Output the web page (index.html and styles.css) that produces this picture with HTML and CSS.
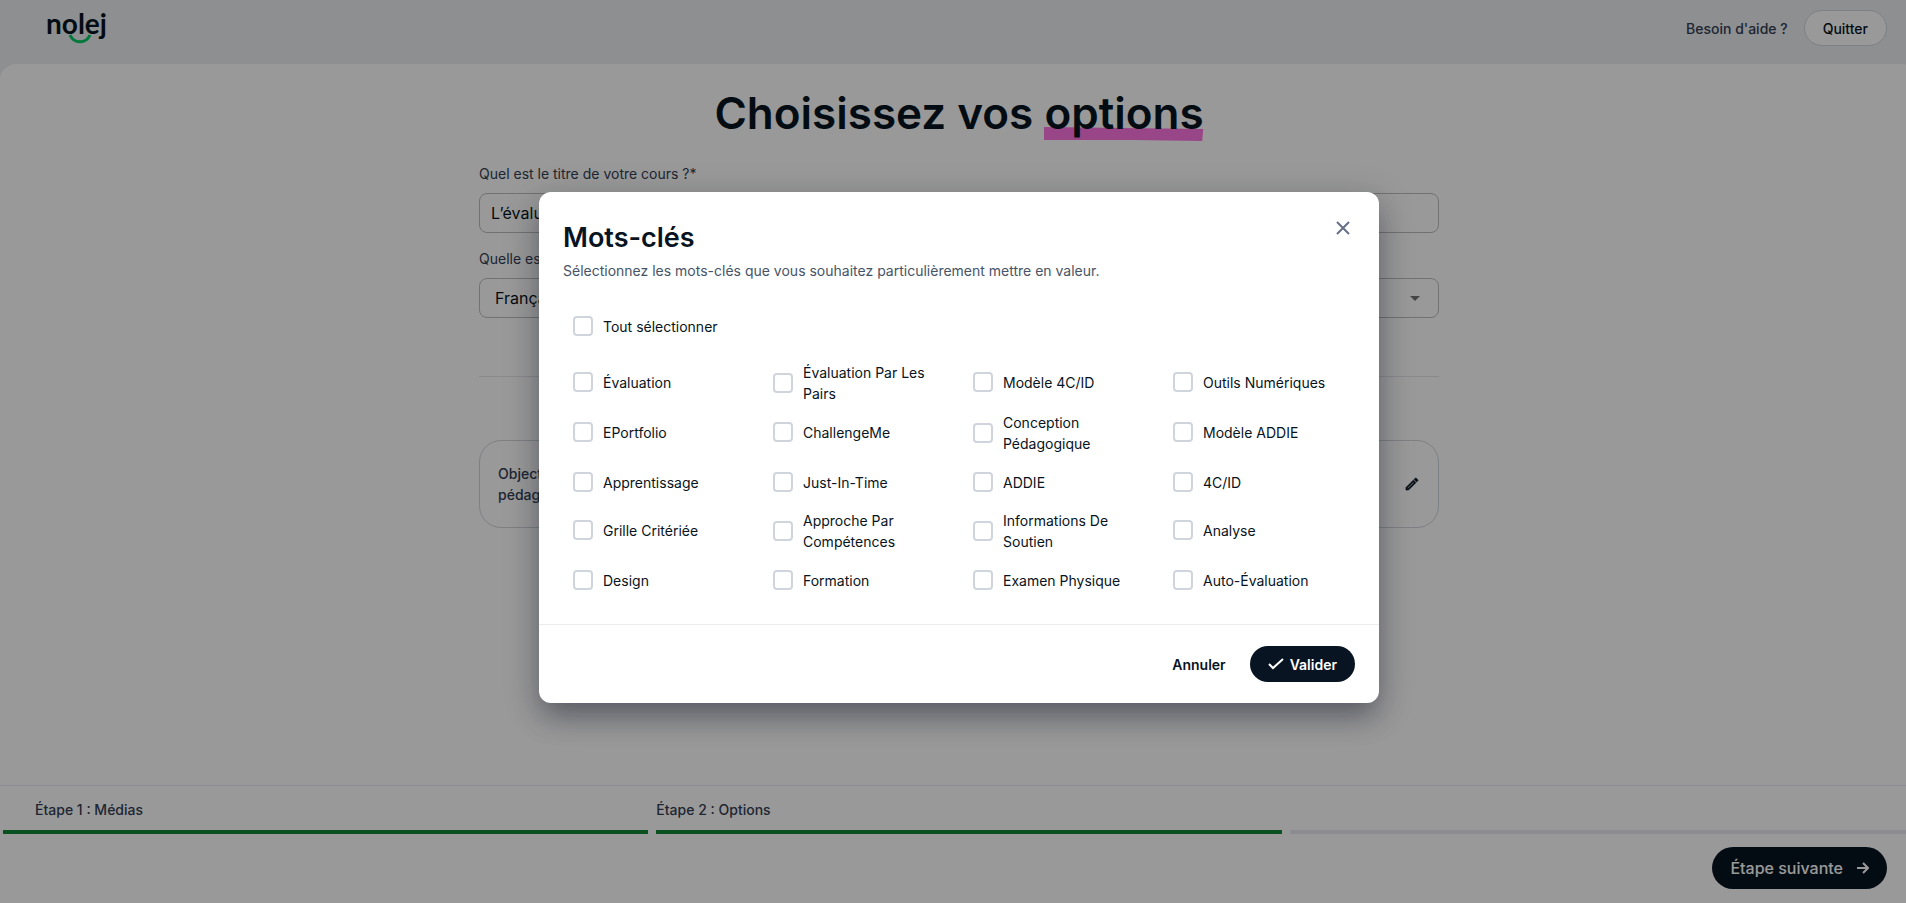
FILE: index.html
```html
<!DOCTYPE html>
<html lang="fr">
<head>
    <meta charset="UTF-8">
    <meta name="viewport" content="width=device-width, initial-scale=1.0">
    <title>Nolej - Choisissez vos options</title>
    <link rel="stylesheet" href="styles.css">
</head>
<body>
    <div class="app">
        <header class="topbar">
            <a href="#" class="logo" aria-label="nolej">
                <span class="logo-text">nolej</span>
                <svg class="logo-smile" width="24" height="10" viewBox="0 0 24 10" fill="none">
                    <path d="M2 1C6 10 18 10 22 1" stroke="#00c862" stroke-width="3"/>
                </svg>
            </a>
            <nav class="topbar-actions">
                <a href="#" class="help-link">Besoin d'aide ?</a>
                <button type="button" class="btn btn-outline">Quitter</button>
            </nav>
        </header>

        <main class="panel">
            <h1>Choisissez vos <span class="highlight">options<svg viewBox="0 0 160 14" preserveAspectRatio="none"><path d="M0 0L160 2L159 14L90 13L0 13Z" fill="#ff75e4"/></svg></span></h1>
            <form class="course-form">
                <div class="form-group">
                    <label for="course-title">Quel est le titre de votre cours ?*</label>
                    <input type="text" id="course-title" value="L’évaluation">
                </div>
                <div class="form-group">
                    <label for="course-lang">Quelle est la langue de votre cours ?*</label>
                    <div class="select-wrap">
                        <select id="course-lang">
                            <option>Français</option>
                        </select>
                        <svg class="caret" width="10" height="5" viewBox="0 0 10 5"><path d="M0 0H10L5 5Z" fill="#757575"/></svg>
                    </div>
                </div>
                <hr>
                <div class="card">
                    <p>Objectifs pédagogiques</p>
                    <button type="button" class="icon-btn" aria-label="Modifier">
                        <svg width="16" height="16" viewBox="0 0 24 24" fill="#081421"><path d="m14.06 9.02.92.92L5.92 19H5v-.92l9.06-9.06M17.66 3c-.25 0-.51.1-.7.29l-1.83 1.83 3.75 3.75 1.83-1.83c.39-.39.39-1.02 0-1.41l-2.34-2.34c-.2-.2-.45-.29-.71-.29zm-3.6 3.19L3 17.25V21h3.75L17.81 9.94l-3.75-3.75z" stroke="#081421"/></svg>
                    </button>
                </div>
            </form>
        </main>

        <footer class="bottom">
            <ol class="steps">
                <li class="step done">Étape 1 : Médias</li>
                <li class="step done">Étape 2 : Options</li>
                <li class="step"></li>
            </ol>
            <div class="bottom-actions">
                <button type="button" class="btn btn-dark btn-next">Étape suivante
                    <svg width="12" height="12" viewBox="0 0 12 12" fill="none" stroke="#fff" stroke-width="2"><path d="M0 6H11M6 1L11 6L6 11"/></svg>
                </button>
            </div>
        </footer>

        <div class="overlay">
            <div class="modal" role="dialog" aria-modal="true" aria-labelledby="modal-title">
                <div class="modal-body">
                    <div class="modal-head">
                        <div>
                            <h2 id="modal-title">Mots-clés</h2>
                            <p class="subtitle">Sélectionnez les mots-clés que vous souhaitez particulièrement mettre en valeur.</p>
                        </div>
                        <button type="button" class="icon-btn" aria-label="Fermer">
                            <svg width="14" height="14" viewBox="0 0 14 14" fill="none" stroke="#667085" stroke-width="2"><path d="M1 1L13 13M13 1L1 13"/></svg>
                        </button>
                    </div>
                    <label class="check"><input type="checkbox"><span>Tout sélectionner</span></label>
                    <div class="keywords">
                        <label class="check"><input type="checkbox"><span>Évaluation</span></label>
                        <label class="check"><input type="checkbox"><span>Évaluation Par Les Pairs</span></label>
                        <label class="check"><input type="checkbox"><span>Modèle 4C/ID</span></label>
                        <label class="check"><input type="checkbox"><span>Outils Numériques</span></label>
                        <label class="check"><input type="checkbox"><span>EPortfolio</span></label>
                        <label class="check"><input type="checkbox"><span>ChallengeMe</span></label>
                        <label class="check"><input type="checkbox"><span>Conception Pédagogique</span></label>
                        <label class="check"><input type="checkbox"><span>Modèle ADDIE</span></label>
                        <label class="check"><input type="checkbox"><span>Apprentissage</span></label>
                        <label class="check"><input type="checkbox"><span>Just-In-Time</span></label>
                        <label class="check"><input type="checkbox"><span>ADDIE</span></label>
                        <label class="check"><input type="checkbox"><span>4C/ID</span></label>
                        <label class="check"><input type="checkbox"><span>Grille Critériée</span></label>
                        <label class="check"><input type="checkbox"><span>Approche Par Compétences</span></label>
                        <label class="check"><input type="checkbox"><span>Informations De Soutien</span></label>
                        <label class="check"><input type="checkbox"><span>Analyse</span></label>
                        <label class="check"><input type="checkbox"><span>Design</span></label>
                        <label class="check"><input type="checkbox"><span>Formation</span></label>
                        <label class="check"><input type="checkbox"><span>Examen Physique</span></label>
                        <label class="check"><input type="checkbox"><span>Auto-Évaluation</span></label>
                    </div>
                </div>
                <div class="modal-footer">
                    <button type="button" class="btn btn-text">Annuler</button>
                    <button type="button" class="btn btn-dark">
                        <svg width="16" height="12" viewBox="0 0 16 12" fill="none" stroke="#fff" stroke-width="2"><path d="M1 6L5 10L15 1"/></svg>
                        Valider
                    </button>
                </div>
            </div>
        </div>
    </div>
</body>
</html>
```
FILE: styles.css
```css
* { margin: 0; padding: 0; box-sizing: border-box; }
html { overflow: hidden; }
body {
    font-family: Inter, "Liberation Sans", sans-serif;
    font-size: 14px; line-height: 21px; color: #081421;
}
button, input, select { font: inherit; color: inherit; }
button { cursor: pointer; }
a { color: inherit; text-decoration: none; }
.app {
    position: relative;
    display: flex; flex-direction: column;
    width: calc(100% + 12px); height: 100vh;
    background: #ebeef2;
}

/* Top bar */
.topbar {
    display: flex; justify-content: space-between; align-items: flex-start;
    height: 64px; padding: 10px 31px 0 46px;
}
.logo { position: relative; }
.logo-text { font-family: Lato, sans-serif; font-size: 28px; line-height: 26px; font-weight: 700; }
.logo-smile { position: absolute; left: 22px; top: 24px; }
.topbar-actions { display: flex; align-items: center; gap: 16px; }
.help-link { font-weight: 500; color: #344054; }
.btn {
    display: inline-flex; align-items: center; justify-content: center;
    height: 36px; padding: 0 18px; gap: 6px;
    border: none; border-radius: 24px; background: none; font-weight: 600;
}
.btn-outline { background: #fff; border: 1px solid #d0d5dd; font-weight: 500; }
.btn-dark { background: #081421; color: #fff; }

/* Page content */
.panel {
    flex: 1; min-height: 0; padding: 20px 24px 0;
    background: #fff; border-radius: 16px 16px 0 0;
}
h1 { text-align: center; font-size: 44px; line-height: 58px; font-weight: 600; }
.highlight { position: relative; z-index: 0; }
.highlight svg { position: absolute; left: 0; bottom: -1px; z-index: -1; width: 100%; height: 14px; }
.course-form { max-width: 960px; margin: 21px auto 0; }
.form-group { margin-bottom: 15px; }
.form-group label { display: block; margin-bottom: 9px; color: #344054; }
.form-group input, .form-group select {
    display: block; width: 100%; height: 40px; padding: 0 11px;
    border: 1px solid #bfbfbf; border-radius: 8px; background: #fff; font-size: 16px;
}
.form-group select { appearance: none; padding-left: 15px; }
.select-wrap { position: relative; }
.caret { position: absolute; right: 19px; top: 18px; }
hr { margin: 58px 0 63px; border: none; border-top: 1px solid #e4e7ec; }
.card {
    display: flex; justify-content: space-between; align-items: center;
    padding: 22px 18px; border: 1px solid #d0d5dd; border-radius: 22px;
}
.card p { width: 120px; font-weight: 500; color: #344054; }
.icon-btn { display: flex; border: none; background: none; }

/* Steps */
.bottom { background: #fff; border-top: 1px solid #eaecf0; }
.steps { display: flex; gap: 8px; padding: 0 3px; list-style: none; }
.step {
    flex: 1; box-sizing: content-box; height: 31px; padding-top: 13px;
    border-bottom: 4px solid #eaecf0; font-weight: 500; color: #344054;
}
.step:first-child { padding-left: 20px; text-indent: 12px; }
.step.done { border-color: #128838; }
.bottom-actions { display: flex; justify-content: flex-end; padding: 13px 31px 14px; }
.btn-next { height: 42px; font-size: 16px; font-weight: 500; gap: 14px; }

/* Modal */
.overlay {
    position: absolute; inset: 0; z-index: 10;
    display: flex; justify-content: center; align-items: center;
    padding-bottom: 8px; background: rgba(0, 0, 0, 0.4);
}
.modal {
    width: 840px; max-width: 100%; background: #fff; border-radius: 12px;
    box-shadow: 0 16px 28px -4px rgba(16, 24, 40, 0.35), 0 8px 36px rgba(16, 24, 40, 0.22);
}
.modal-body { padding: 24px; }
.modal-head { display: flex; justify-content: space-between; align-items: flex-start; margin-bottom: 25px; }
.modal-head .icon-btn { padding: 5px; }
h2 { font-size: 27px; line-height: 44px; font-weight: 600; }
.subtitle { color: #475467; }
.check { display: flex; align-items: center; gap: 10px; min-height: 40px; padding-left: 10px; }
.check input {
    appearance: none; flex: none; width: 20px; height: 20px;
    border: 2px solid #d0d5dd; border-radius: 4px; background: #fff;
}
.check input:checked { background: #081421; border-color: #081421; }
.keywords {
    display: grid; grid-template-columns: repeat(4, 1fr); gap: 8px;
    align-items: start; margin-top: 16px;
}
.keywords span { padding-right: 8px; }
.modal-footer {
    display: flex; justify-content: flex-end; gap: 6px;
    padding: 21px 24px; border-top: 1px solid #eaecf0;
}
```
